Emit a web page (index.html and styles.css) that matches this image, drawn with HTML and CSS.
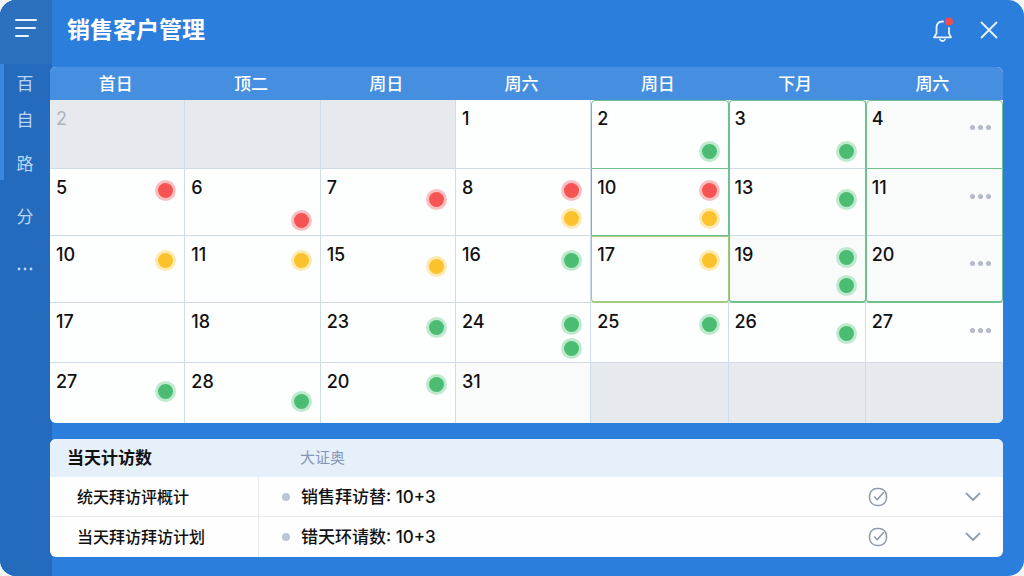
FILE: index.html
```html
<!DOCTYPE html>
<html lang="zh-CN">

<head>
  <meta charset="UTF-8">
  <meta name="viewport" content="width=device-width, initial-scale=1.0">
  <title>销售客户管理</title>
  <link rel="stylesheet" href="styles.css">
</head>

<body>
  <div class="app">
    <aside class="sidebar">
      <button type="button" class="menu-btn" aria-label="菜单">
        <svg width="22" height="18" viewBox="0 0 22 18" fill="none" stroke="currentColor" stroke-width="2" stroke-linecap="round">
          <path d="M1 1H21M1 9H20M1 17H13" />
        </svg>
      </button>
      <nav class="side-nav">
        <a href="#">百</a>
        <a href="#">自</a>
        <a href="#" class="spaced">路</a>
        <a href="#" class="spaced">分</a>
        <a href="#" class="spaced" aria-label="更多">
          <svg width="16" height="4" viewBox="0 0 16 4" fill="currentColor">
            <circle cx="2" cy="2" r="1.4" /><circle cx="8" cy="2" r="1.4" /><circle cx="14" cy="2" r="1.4" />
          </svg>
        </a>
      </nav>
    </aside>

    <main class="content">
      <header class="topbar">
        <h1>销售客户管理</h1>
        <div class="actions">
          <button type="button" class="icon-btn" aria-label="通知">
            <svg width="22" height="26" viewBox="0 0 22 26" fill="none" stroke="currentColor" stroke-width="1.8" stroke-linecap="round" stroke-linejoin="round">
              <path d="M11 4.500C6.500 4.500 4.500 7 4.500 11V16.500L2 20.300H19L17 16.500V11" />
              <path d="M8 22.500C8.800 24.500 12.200 24.500 13 22.500" />
              <circle cx="17" cy="4.500" r="4" fill="#f04c4c" stroke="none" />
            </svg>
          </button>
          <button type="button" class="icon-btn" aria-label="关闭">
            <svg width="18" height="18" viewBox="0 0 18 18" fill="none" stroke="currentColor" stroke-width="1.8" stroke-linecap="round">
              <path d="M1.500 1.500L16.500 16.500M16.500 1.500L1.500 16.500" />
            </svg>
          </button>
        </div>
      </header>

      <table class="calendar">
        <thead>
          <tr>
            <th class="narrow">首日</th>
            <th class="narrow">顶二</th>
            <th class="narrow">周日</th>
            <th class="narrow">周六</th>
            <th>周日</th>
            <th>下月</th>
            <th>周六</th>
          </tr>
        </thead>
        <tbody>
          <tr class="row-first">
            <td class="off"><div class="day"><span class="num">2</span></div></td>
            <td class="off"></td>
            <td class="off"></td>
            <td><div class="day"><span class="num">1</span></div></td>
            <td class="hl hl-top hl-line"><div class="day"><span class="num">2</span><div class="marks low"><i class="dot green"></i></div></div></td>
            <td class="hl hl-top"><div class="day"><span class="num">3</span><div class="marks low"><i class="dot green"></i></div></div></td>
            <td class="hl hl-top hl-line soft"><div class="day"><span class="num">4</span><button type="button" class="more" aria-label="更多"><i></i><i></i><i></i></button></div></td>
          </tr>
          <tr class="row-mid">
            <td><div class="day"><span class="num">5</span><div class="marks high"><i class="dot red"></i></div></div></td>
            <td><div class="day"><span class="num">6</span><div class="marks low"><i class="dot red"></i></div></div></td>
            <td><div class="day"><span class="num">7</span><div class="marks mid"><i class="dot red"></i></div></div></td>
            <td><div class="day"><span class="num">8</span><div class="marks high"><i class="dot red"></i><i class="dot yellow"></i></div></div></td>
            <td class="hl hl-line"><div class="day"><span class="num">10</span><div class="marks high"><i class="dot red"></i><i class="dot yellow"></i></div></div></td>
            <td class="hl"><div class="day"><span class="num">13</span><div class="marks mid"><i class="dot green"></i></div></div></td>
            <td class="hl soft"><div class="day"><span class="num">11</span><button type="button" class="more" aria-label="更多"><i></i><i></i><i></i></button></div></td>
          </tr>
          <tr class="row-mid">
            <td><div class="day"><span class="num">10</span><div class="marks near"><i class="dot yellow"></i></div></div></td>
            <td><div class="day"><span class="num">11</span><div class="marks near"><i class="dot yellow"></i></div></div></td>
            <td><div class="day"><span class="num">15</span><div class="marks mid"><i class="dot yellow"></i></div></div></td>
            <td><div class="day"><span class="num">16</span><div class="marks near"><i class="dot green"></i></div></div></td>
            <td class="hl hl-bottom hl-olive"><div class="day"><span class="num">17</span><div class="marks near"><i class="dot yellow"></i></div></div></td>
            <td class="hl hl-bottom soft"><div class="day"><span class="num">19</span><div class="marks high"><i class="dot green"></i><i class="dot green"></i></div></div></td>
            <td class="hl hl-bottom soft"><div class="day"><span class="num">20</span><button type="button" class="more" aria-label="更多"><i></i><i></i><i></i></button></div></td>
          </tr>
          <tr class="row-short">
            <td><div class="day"><span class="num">17</span></div></td>
            <td><div class="day"><span class="num">18</span></div></td>
            <td><div class="day"><span class="num">23</span><div class="marks near"><i class="dot green"></i></div></div></td>
            <td><div class="day"><span class="num">24</span><div class="marks high"><i class="dot green"></i><i class="dot green"></i></div></div></td>
            <td><div class="day"><span class="num">25</span><div class="marks high"><i class="dot green"></i></div></div></td>
            <td><div class="day"><span class="num">26</span><div class="marks mid"><i class="dot green"></i></div></div></td>
            <td><div class="day"><span class="num">27</span><button type="button" class="more" aria-label="更多"><i></i><i></i><i></i></button></div></td>
          </tr>
          <tr class="row-short row-last">
            <td><div class="day"><span class="num">27</span><div class="marks mid"><i class="dot green"></i></div></div></td>
            <td><div class="day"><span class="num">28</span><div class="marks low"><i class="dot green"></i></div></div></td>
            <td><div class="day"><span class="num">20</span><div class="marks high"><i class="dot green"></i></div></div></td>
            <td class="soft"><div class="day"><span class="num">31</span></div></td>
            <td class="off"></td>
            <td class="off"></td>
            <td class="off"></td>
          </tr>
        </tbody>
      </table>

      <table class="visits">
        <thead>
          <tr>
            <th class="col-name">当天计访数</th>
            <th class="col-value">大证奥</th>
            <th class="col-check"></th>
            <th class="col-open"></th>
          </tr>
        </thead>
        <tbody>
          <tr>
            <td class="name">统天拜访评概计</td>
            <td class="value">销售拜访替: 10+3</td>
            <td>
              <button type="button" class="row-btn" aria-label="完成">
                <svg width="20" height="20" viewBox="0 0 20 20" fill="none" stroke="currentColor" stroke-width="1.6" stroke-linecap="round" stroke-linejoin="round">
                  <rect x="1.500" y="1.500" width="17" height="17" rx="7.500" />
                  <path d="M6.500 10L9.300 12.600L15.500 5.500" />
                </svg>
              </button>
            </td>
            <td>
              <button type="button" class="row-btn" aria-label="展开">
                <svg width="16" height="10" viewBox="0 0 16 10" fill="none" stroke="currentColor" stroke-width="1.8" stroke-linecap="round" stroke-linejoin="round">
                  <path d="M1.500 1.500L8 8L14.500 1.500" />
                </svg>
              </button>
            </td>
          </tr>
          <tr>
            <td class="name">当天拜访拜访计划</td>
            <td class="value">错天环请数: 10+3</td>
            <td>
              <button type="button" class="row-btn" aria-label="完成">
                <svg width="20" height="20" viewBox="0 0 20 20" fill="none" stroke="currentColor" stroke-width="1.6" stroke-linecap="round" stroke-linejoin="round">
                  <rect x="1.500" y="1.500" width="17" height="17" rx="7.500" />
                  <path d="M6.500 10L9.300 12.600L15.500 5.500" />
                </svg>
              </button>
            </td>
            <td>
              <button type="button" class="row-btn" aria-label="展开">
                <svg width="16" height="10" viewBox="0 0 16 10" fill="none" stroke="currentColor" stroke-width="1.8" stroke-linecap="round" stroke-linejoin="round">
                  <path d="M1.500 1.500L8 8L14.500 1.500" />
                </svg>
              </button>
            </td>
          </tr>
        </tbody>
      </table>
    </main>
  </div>
</body>

</html>
```
FILE: styles.css
```css
* {
  box-sizing: border-box;
}

body {
  margin: 0;
  background-color: #f4f6f5;
  font-family: Inter, "Noto Sans CJK SC", sans-serif;
  color: #111;
}

button {
  padding: 0;
  border: none;
  background: none;
  color: inherit;
  cursor: pointer;
}

svg {
  display: block;
}

.app {
  display: flex;
  min-height: 100vh;
  background-color: #2c7edc;
  border-radius: 16px;
  overflow: hidden;
}

/* Sidebar */
.sidebar {
  flex: none;
  width: 52px;
  background-color: #246bbd;
}

.menu-btn {
  display: flex;
  align-items: center;
  justify-content: center;
  width: 100%;
  height: 64px;
  padding-bottom: 8px;
  background-color: #2c71bd;
  color: #e8f2fc;
}

.side-nav {
  display: flex;
  flex-direction: column;
  height: 116px;
  border-left: 4px solid #3a88e0;
}

.side-nav a {
  flex: none;
  display: flex;
  align-items: center;
  justify-content: center;
  height: 36px;
  padding-right: 6px;
  color: #b9d6f5;
  font-size: 17px;
  text-decoration: none;
}

.side-nav .spaced {
  height: 53px;
}

/* Top bar */
.content {
  flex: 1;
  min-width: 0;
  margin-left: -2px;
  padding-right: 21px;
  padding-bottom: 16px;
}

.topbar {
  display: flex;
  align-items: center;
  justify-content: space-between;
  height: 67px;
  padding: 0 5px 8px 17px;
  color: #fff;
}

.topbar h1 {
  margin: 0;
  font-size: 23px;
  line-height: 32px;
  font-weight: 700;
}

.actions {
  display: flex;
  align-items: center;
  gap: 26px;
  color: #eaf3fd;
}

/* Calendar */
.calendar {
  position: relative;
  width: 100%;
  table-layout: fixed;
  border-collapse: separate;
  border-spacing: 0;
  border-radius: 6px;
  overflow: hidden;
  background-color: #fdfefe;
}

.calendar th {
  height: 33px;
  padding: 0 4px 0 0;
  background-color: #468edf;
  color: #fff;
  font-size: 17px;
  line-height: 24px;
  font-weight: 500;
}

.calendar .narrow {
  width: 14.2%;
}

.calendar td {
  position: relative;
  padding: 0;
  vertical-align: top;
  border-right: 1px solid #cfdbe6;
  border-bottom: 1px solid #cfdbe6;
}

.calendar td:last-child {
  border-right-color: transparent;
}

.row-first td {
  height: 69px;
}

.row-mid td {
  height: 67px;
}

.row-short td {
  height: 60px;
}

.row-last td {
  border-bottom: none;
}

.calendar .off {
  background-color: #e6eaef;
}

.calendar .off .num {
  color: #adb3bf;
  font-weight: 400;
}

.calendar .soft {
  background-color: #f9fafa;
}

/* green frame round the highlighted columns */
.hl::after {
  content: "";
  position: absolute;
  inset: 0 -1px -1px 0;
  border: 0 solid #6fc18e;
  border-left-width: 1px;
  border-right-width: 1px;
  pointer-events: none;
}

.hl-top::after {
  border-top-width: 1px;
  border-radius: 4px 4px 0 0;
}

.hl-line::after {
  border-bottom-width: 1px;
}

.hl-bottom::after {
  border-bottom-width: 2px;
  border-radius: 0 0 4px 4px;
}

.hl-olive::after {
  border-top-width: 1px;
  border-color: #a3cb80;
}

.day {
  display: flex;
  justify-content: space-between;
  align-items: flex-start;
  padding: 0 11px 0 6px;
}

.num {
  padding-top: 8px;
  font-size: 18px;
  line-height: 22px;
  font-weight: 500;
}

.marks {
  display: flex;
  flex-direction: column;
  gap: 13px;
}

.row-short .marks {
  gap: 9px;
}

.high {
  padding-top: 14px;
}

.near {
  padding-top: 17px;
}

.mid {
  padding-top: 23px;
}

.low {
  padding-top: 44px;
}

.row-last .mid {
  padding-top: 21px;
}

.row-last .low {
  padding-top: 31px;
}

.dot {
  width: 15px;
  height: 15px;
  border-radius: 50%;
}

.red {
  background-color: #f65353;
  box-shadow: 0 0 0 3px #f9c0c3;
}

.yellow {
  background-color: #fbc22d;
  box-shadow: 0 0 0 3px #fbeab2;
}

.green {
  background-color: #4abd72;
  box-shadow: 0 0 0 3px #c0ead0;
}

.more {
  display: flex;
  gap: 3px;
  padding-top: 25px;
}

.more i {
  width: 5px;
  height: 5px;
  border-radius: 50%;
  background-color: #b3bac7;
}

/* Visit list */
.visits {
  position: relative;
  width: 100%;
  margin-top: 16px;
  table-layout: fixed;
  border-collapse: separate;
  border-spacing: 0;
  border-radius: 6px;
  overflow: hidden;
  background-color: #fefefe;
}

.visits th {
  height: 38px;
  padding: 0;
  background-color: #e6f0fb;
  text-align: left;
  font-size: 17px;
  line-height: 24px;
}

.visits .col-name {
  width: 209px;
  padding-left: 17px;
  font-weight: 600;
}

.visits .col-value {
  padding-left: 41px;
  color: #8595b8;
  font-size: 15px;
  font-weight: 400;
}

.visits .col-check {
  width: 100px;
}

.visits .col-open {
  width: 60px;
}

.visits td {
  height: 40px;
  padding: 0;
  font-weight: 500;
  line-height: 24px;
}

.visits tr:first-child td {
  border-bottom: 1px solid #e6eaef;
}

.visits .name {
  padding-left: 27px;
  border-right: 1px solid #e6eaef;
  font-size: 16px;
}

.visits .value {
  padding-left: 23px;
  font-size: 17px;
}

.value::before {
  content: "";
  display: inline-block;
  width: 8px;
  height: 8px;
  margin-right: 11px;
  border-radius: 50%;
  background-color: #bcc4d6;
  vertical-align: 2px;
}

.row-btn {
  display: flex;
  align-items: center;
  justify-content: center;
  width: 60px;
  height: 24px;
  color: #929dae;
}

.visits td:nth-child(3) .row-btn {
  width: 70px;
}
```
